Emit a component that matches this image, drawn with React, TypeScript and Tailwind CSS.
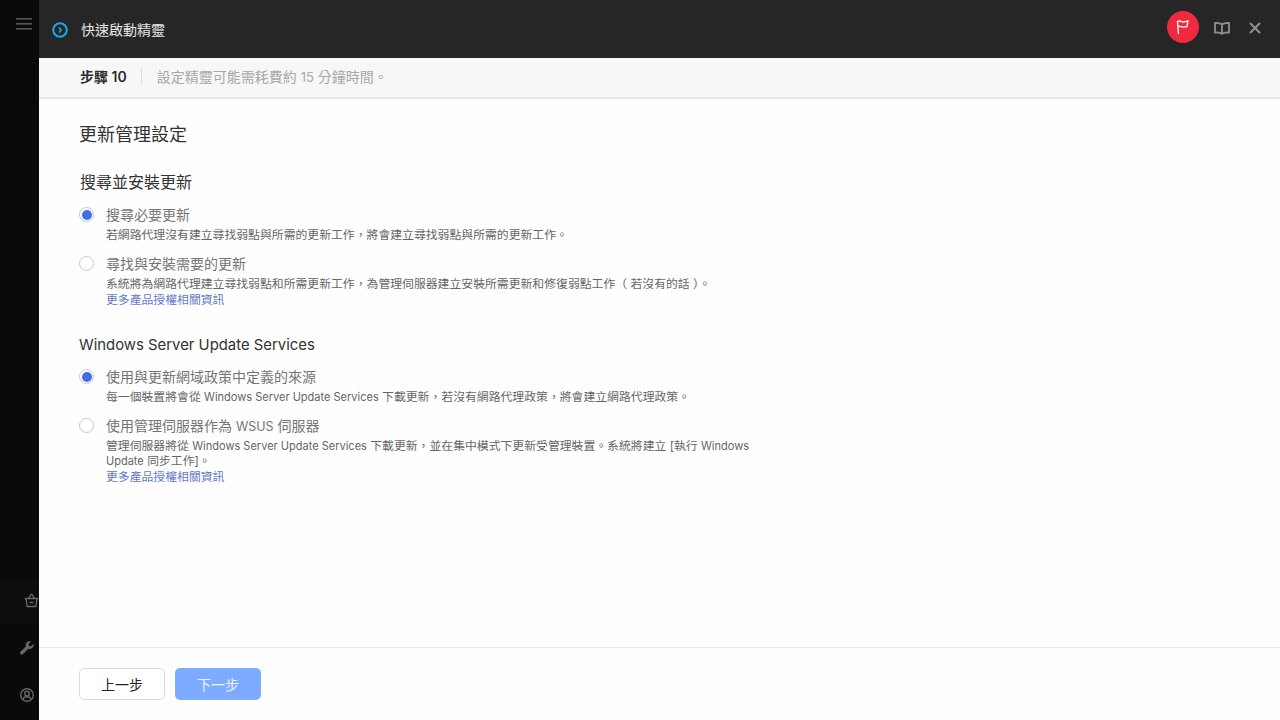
import type { ReactNode } from 'react'
import { X } from 'lucide-react'

const FONT = "font-['Inter','Noto_Sans_CJK_TC',sans-serif]"

type OptionProps = {
  checked?: boolean
  label: ReactNode
  desc: ReactNode
  link?: boolean
  className?: string
}

// Latin runs are set a little smaller than the CJK around them
function L({ children }: { children: ReactNode }) {
  return <span className="text-[0.93em] leading-none">{children}</span>
}

function Radio({ checked }: { checked?: boolean }) {
  return (
    <span className="flex h-[15px] w-[15px] shrink-0 items-center justify-center rounded-full border border-[#c4c8d0] bg-white">
      {checked && <span className="h-[10px] w-[10px] rounded-full bg-[#3d6fe8]" />}
    </span>
  )
}

function MoreLink() {
  return <div className="mt-px h-[15px] text-[11.85px] leading-[15px] text-[#6079c8]">更多產品授權相關資訊</div>
}

function Option({ checked, label, desc, link, className }: OptionProps) {
  return (
    <div className={`flex w-[680px] ${className ?? ''}`}>
      <div className="w-[27px] shrink-0 pt-[2px]">
        <Radio checked={checked} />
      </div>
      <div>
        <div className="h-[19px] pt-px text-[14px] leading-[18px] text-[#757575]">{label}</div>
        <div className="mt-[4px] text-[11.85px] leading-[15px] text-[#666666]">{desc}</div>
        {link && <MoreLink />}
      </div>
    </div>
  )
}

export default function App() {
  return (
    <div lang="zh-TW" className={`flex h-[720px] w-[1280px] overflow-hidden bg-white ${FONT}`}>
      {/* Sidebar, partly covered by the wizard */}
      <aside className="flex w-[39px] shrink-0 flex-col overflow-hidden bg-[#0a0a0a]">
        <div className="pt-[18px] pl-[16px]">
          <svg width="16" height="12" viewBox="0 0 16 12" fill="#565656">
            <rect y="0" width="16" height="1.6" />
            <rect y="5" width="16" height="1.6" />
            <rect y="10" width="16" height="1.6" />
          </svg>
        </div>
        <div className="mt-auto flex h-[44px] items-center bg-[#0d0d0d] pb-[4px] pl-[24px]">
          <svg className="shrink-0" width="15" height="15" viewBox="0 0 15 15" fill="none" stroke="#6a6a6a" strokeWidth="1.3">
            <path d="M.8 5.500h13.400M2 5.500l1.200 8h8.600l1.200-8M4.500 5.500 7 1.500h1l2.500 4M5.500 9.500h4" />
          </svg>
        </div>
        <div className="flex h-[48px] items-center pl-[20px]">
          <svg className="shrink-0" width="14" height="14" viewBox="0 0 14 14" fill="#666666">
            <path d="M13.400 2.800 11 5.200 9 4.900 8.700 3 11.100.6C9.500-.1 7.700.3 6.600 1.500 5.600 2.600 5.400 4.100 5.800 5.400L.6 10.600c-.7.7-.7 1.800 0 2.500s1.800.7 2.500 0L8.300 7.900c1.300.4 2.900.2 3.900-.8 1.200-1.200 1.800-2.800 1.200-4.300Z" />
          </svg>
        </div>
        <div className="flex h-[48px] items-center pb-[3px] pl-[20px]">
          <svg className="shrink-0" width="14" height="14" viewBox="0 0 14 14" fill="none" stroke="#666666" strokeWidth="1.400">
            <circle cx="7" cy="7" r="6.300" />
            <circle cx="7" cy="5.600" r="2.300" />
            <path d="M2.800 11.600c.6-1.900 2.300-2.900 4.200-2.900s3.600 1 4.200 2.900" />
          </svg>
        </div>
      </aside>

      <main className="flex min-w-0 flex-1 flex-col bg-[#fefefe]">
        {/* Title bar */}
        <header className="flex h-[58px] shrink-0 items-center bg-[#262626] pt-[2px] pl-[13px] pr-[16px]">
          <svg width="16" height="16" viewBox="0 0 16 16" fill="none" stroke="#1ca8ec">
            <circle cx="8" cy="8" r="6.800" strokeWidth="2" />
            <path d="m6.800 5.500 2.500 2.500-2.500 2.500" strokeWidth="1.500" />
          </svg>
          <span className="ml-[13px] -translate-y-px text-[14px] text-[#e6e6e6]">快速啟動精靈</span>
          <div className="-mt-[4px] ml-auto flex items-center">
            <span className="-mt-[2px] flex h-[32px] w-[32px] items-center justify-center rounded-full bg-[#ee2a3c]">
              <svg width="14" height="16" viewBox="0 0 14 16" fill="none" stroke="#fff" strokeWidth="1.300">
                <path d="M2.500 15 1.500 2.500c2.500-1.500 4 .5 5.500.5s3-.7 5-1L11 7.500c-2 0-3 .8-4.500.5S3.500 6.500 2 8" />
              </svg>
            </span>
            <svg className="ml-[15px]" width="16" height="13" viewBox="0 0 16 13" fill="none" stroke="#8a8a8a" strokeWidth="1.900">
              <path d="M8 2.500C6.500 1 4 .8 1 1v9.500c3-.2 5.500 0 7 1.300 1.500-1.300 4-1.500 7-1.300V1c-3-.2-5.500 0-7 1.500ZM8 2.500v9" />
            </svg>
            <X className="ml-[16px] text-[#8f8f8f]" size={18} strokeWidth={2.800} />
          </div>
        </header>

        {/* Step bar */}
        <div className="flex h-[41px] shrink-0 items-center border-b-2 border-[#e6e6e6] bg-[#f7f7f7] pb-[2px] pl-[41px]">
          <span className="text-[14px] font-semibold text-[#2c2c2c]">步驟 10</span>
          <span className="mr-[15px] ml-[14px] h-[17px] w-px bg-[#dedede]" />
          <span className="text-[14px] text-[#a8a8a8]">設定精靈可能需耗費約 <L>15</L> 分鐘時間。</span>
        </div>

        {/* Form */}
        <div className="flex-1 pl-[40px]">
          <h1 className="mt-[24px] h-[24px] text-[18px] leading-[24px] font-normal text-[#333333]">更新管理設定</h1>

          <h2 className="mt-[24px] h-[22px] pl-px text-[16px] leading-[22px] font-normal text-[#333333]">搜尋並安裝更新</h2>
          <Option
            className="mt-[12px]"
            checked
            label="搜尋必要更新"
            desc="若網路代理沒有建立尋找弱點與所需的更新工作，將會建立尋找弱點與所需的更新工作。"
          />
          <Option
            className="mt-[11px]"
            label="尋找與安裝需要的更新"
            desc="系統將為網路代理建立尋找弱點和所需更新工作，為管理伺服器建立安裝所需更新和修復弱點工作（ 若沒有的話 ）。"
            link
          />

          <h2 className="mt-[25px] h-[22px] text-[16px] leading-[22px] font-normal text-[#333333]"><L>Windows Server Update Services</L></h2>
          <Option
            className="mt-[12px]"
            checked
            label="使用與更新網域政策中定義的來源"
            desc={<>每一個裝置將會從 <L>Windows Server Update Services</L> 下載更新，若沒有網路代理政策，將會建立網路代理政策。</>}
          />
          <Option
            className="mt-[11px]"
            label={<>使用管理伺服器作為 <span className="text-[12.5px] leading-none">WSUS</span> 伺服器</>}
            desc={<>管理伺服器將從 <L>Windows Server Update Services</L> 下載更新，並在集中模式下更新受管理裝置。系統將建立 [執行 <L>Windows Update</L> 同步工作]。</>}
            link
          />
        </div>

        {/* Footer */}
        <footer className="flex h-[73px] shrink-0 items-start gap-[10px] border-t border-[#e8e8e8] pt-[20px] pl-[40px]">
          <button className="h-[32px] w-[86px] rounded-[5px] border border-[#d8dbe0] bg-white text-[14px] text-[#222]">上一步</button>
          <button className="h-[32px] w-[86px] rounded-[5px] bg-[#7dabff] text-[14px] text-[#eef4ff]">下一步</button>
        </footer>
      </main>
    </div>
  )
}
